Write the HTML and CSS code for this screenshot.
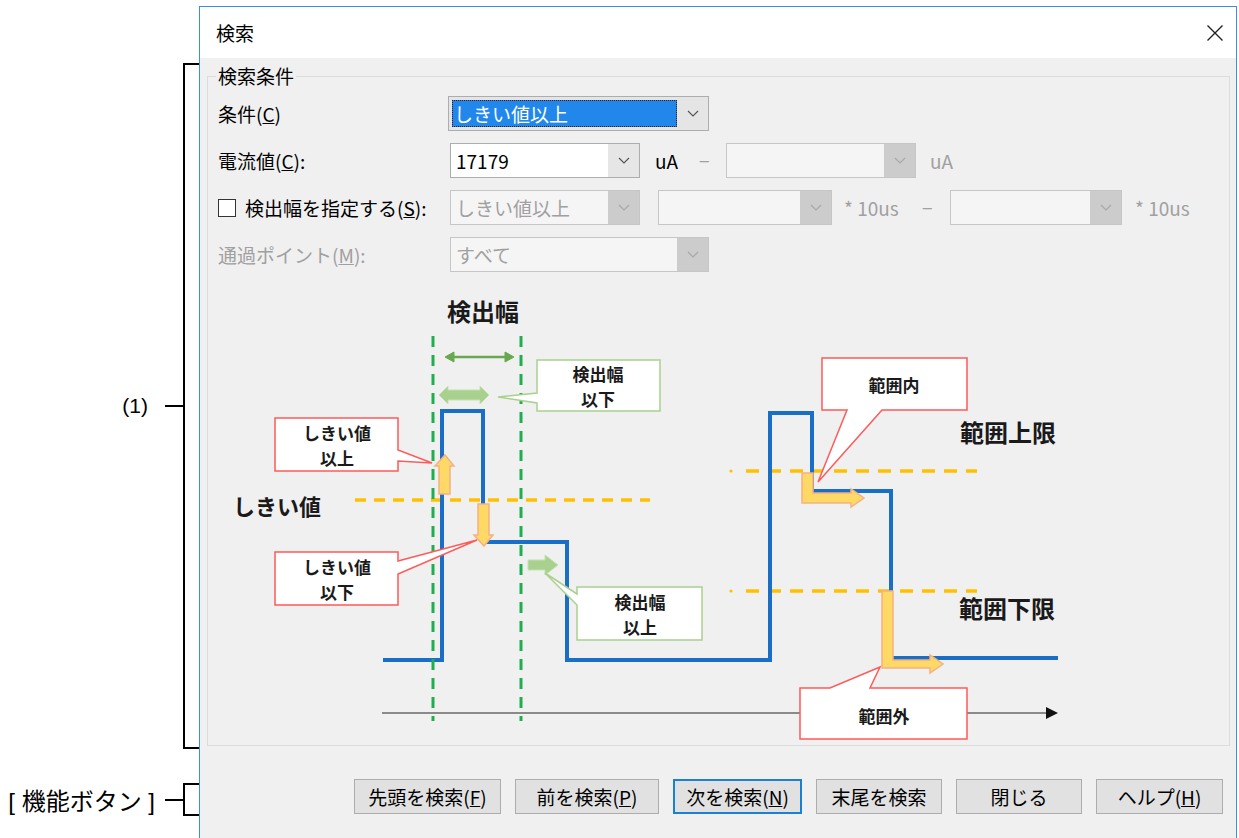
FILE: index.html
```html
<!DOCTYPE html>
<html lang="ja">
<head>
<meta charset="utf-8">
<title>検索</title>
<link rel="stylesheet" href="styles.css">
</head>
<body>
<div class="page">
  <div class="annot">
    <div class="brk brk-main"><span class="brk-label">(1)</span><span class="brk-tick"></span><span class="brk-bar"></span></div>
    <div class="brk brk-btn"><span class="brk-label brk-label-lg">[ 機能ボタン ]</span><span class="brk-tick"></span><span class="brk-bar"></span></div>
  </div>

  <div class="dialog">
    <div class="titlebar">
      <span class="title">検索</span>
      <svg class="close" width="18" height="18" viewBox="0 0 18 18"><path d="M1.5 1.5 L16.5 16.5 M16.5 1.5 L1.5 16.5" stroke="#222" stroke-width="1.4" fill="none"/></svg>
    </div>

    <div class="client">
      <fieldset class="group">
        <legend>検索条件</legend>
        <div class="rows">
          <div class="row">
            <span class="lab">条件(<u>C</u>)</span>
            <div class="combo list w261">
              <span class="txt"><span class="sel">しきい値以上</span></span>
              <span class="drop"><svg width="12" height="7" viewBox="0 0 12 7"><path d="M1 1 L6 6 L11 1" stroke="#555" stroke-width="1.2" fill="none"/></svg></span>
            </div>
          </div>

          <div class="row">
            <span class="lab">電流値(<u>C</u>):</span>
            <div class="combo w190">
              <span class="txt">17179</span>
              <span class="drop"><svg width="12" height="7" viewBox="0 0 12 7"><path d="M1 1 L6 6 L11 1" stroke="#555" stroke-width="1.2" fill="none"/></svg></span>
            </div>
            <span class="cell ua1">uA</span>
            <span class="cell dash1 dis">−</span>
            <div class="combo dis-combo w190">
              <span class="txt"></span>
              <span class="drop"><svg width="12" height="7" viewBox="0 0 12 7"><path d="M1 1 L6 6 L11 1" stroke="#a8a8a8" stroke-width="1.2" fill="none"/></svg></span>
            </div>
            <span class="cell ua2 dis">uA</span>
          </div>

          <div class="row">
            <span class="lab lab-check"><span class="check"></span>検出幅を指定する(<u>S</u>):</span>
            <div class="combo dis-combo w190">
              <span class="txt dis">しきい値以上</span>
              <span class="drop"><svg width="12" height="7" viewBox="0 0 12 7"><path d="M1 1 L6 6 L11 1" stroke="#a8a8a8" stroke-width="1.2" fill="none"/></svg></span>
            </div>
            <div class="combo dis-combo w174 ml18">
              <span class="txt"></span>
              <span class="drop"><svg width="12" height="7" viewBox="0 0 12 7"><path d="M1 1 L6 6 L11 1" stroke="#a8a8a8" stroke-width="1.2" fill="none"/></svg></span>
            </div>
            <span class="cell us1 dis">* 10us</span>
            <span class="cell dash2 dis">−</span>
            <div class="combo dis-combo w172">
              <span class="txt"></span>
              <span class="drop"><svg width="12" height="7" viewBox="0 0 12 7"><path d="M1 1 L6 6 L11 1" stroke="#a8a8a8" stroke-width="1.2" fill="none"/></svg></span>
            </div>
            <span class="cell us2 dis">* 10us</span>
          </div>

          <div class="row">
            <span class="lab dis">通過ポイント(<u>M</u>):</span>
            <div class="combo dis-combo w259">
              <span class="txt dis">すべて</span>
              <span class="drop"><svg width="12" height="7" viewBox="0 0 12 7"><path d="M1 1 L6 6 L11 1" stroke="#a8a8a8" stroke-width="1.2" fill="none"/></svg></span>
            </div>
          </div>
        </div>

        <svg class="diagram" width="1021" height="465" viewBox="208 280 1021 465">
          <line x1="382" y1="713" x2="1048" y2="713" stroke="#8a8a8a" stroke-width="2"/>
          <path d="M1046 707 L1058 713 L1046 719 Z" fill="#111"/>

          <text class="big" x="483" y="310">検出幅</text>
          <text class="big big2" x="277" y="505">しきい値</text>
          <text class="big" x="1008" y="431">範囲上限</text>
          <text class="big" x="1007" y="607">範囲下限</text>

          <line x1="355" y1="500" x2="650" y2="500" stroke="#ffc000" stroke-width="3.5" stroke-dasharray="11 8"/>
          <circle cx="731" cy="471" r="1.6" fill="#ffc000"/>
          <line x1="746" y1="471" x2="977" y2="471" stroke="#ffc000" stroke-width="3.5" stroke-dasharray="13 9"/>
          <circle cx="731" cy="591" r="1.6" fill="#ffc000"/>
          <line x1="746" y1="591" x2="977" y2="591" stroke="#ffc000" stroke-width="3.5" stroke-dasharray="13 9"/>

          <path d="M383 660 H442 V411 H483 V542 H567 V660 H770 V413 H812 V491 H891 V658 H1058" stroke="#1a6ec6" stroke-width="4" fill="none" stroke-linejoin="miter"/>

          <line x1="433" y1="336" x2="433" y2="721" stroke="#1fae4f" stroke-width="3" stroke-dasharray="11 8"/>
          <line x1="521" y1="336" x2="521" y2="721" stroke="#1fae4f" stroke-width="3" stroke-dasharray="11 8"/>

          <line x1="452" y1="357" x2="506" y2="357" stroke="#6aa84f" stroke-width="2.5"/>
          <path d="M445 357 L454 352 L454 362 Z M514 357 L505 352 L505 362 Z" fill="#6aa84f" stroke="#6aa84f" stroke-width="1"/>

          <path d="M439 395 L448 386 L448 390 L480 390 L480 386 L489 395 L480 404 L480 400 L448 400 L448 404 Z" fill="#a9d18e" stroke="#c5e0b4" stroke-width="1"/>

          <path d="M528 560 L545 560 L545 555 L558 565 L545 575 L545 570 L528 570 Z" fill="#a9d18e" stroke="#c5e0b4" stroke-width="1"/>

          <path d="M445 455 L454 466 L450 466 L450 494 L439 494 L439 466 L435 466 Z" fill="#ffd966" stroke="#f4b183" stroke-width="1.5"/>
          <path d="M484 546 L493 535 L489 535 L489 504 L478 504 L478 535 L474 535 Z" fill="#ffd966" stroke="#f4b183" stroke-width="1.5"/>
          <path d="M802 473 L813 473 L813 493 L851 493 L851 489 L864 498 L851 507 L851 503 L802 503 Z" fill="#ffd966" stroke="#f4b183" stroke-width="1.5"/>
          <path d="M882 591 L893 591 L893 660 L930 660 L930 655 L943 664 L930 673 L930 668 L882 668 Z" fill="#ffd966" stroke="#f4b183" stroke-width="1.5"/>

          <path d="M537 360 H660 V411 H537 V403 L498 397 L537 393 Z" fill="#fff" stroke="#a9d18e" stroke-width="1.5"/>
          <text class="co" x="598" y="373">検出幅</text>
          <text class="co" x="598" y="398">以下</text>

          <path d="M577 587 H702 V640 H577 V605 L545 573 L577 594 Z" fill="#fff" stroke="#a9d18e" stroke-width="1.5"/>
          <text class="co" x="640" y="601">検出幅</text>
          <text class="co" x="640" y="626">以上</text>

          <path d="M275 418 H398 V450 L432 463 L398 461 V471 H275 Z" fill="#fff" stroke="#ff5a5a" stroke-width="1.5"/>
          <text class="co" x="337" y="432">しきい値</text>
          <text class="co" x="337" y="457">以上</text>

          <path d="M275 552 H398 V561 L477 540 L398 574 V605 H275 Z" fill="#fff" stroke="#ff5a5a" stroke-width="1.5"/>
          <text class="co" x="337" y="566">しきい値</text>
          <text class="co" x="337" y="591">以下</text>

          <path d="M822 358 H967 V410 H882 L818 482 L847 410 H822 Z" fill="#fff" stroke="#ff5a5a" stroke-width="1.5"/>
          <text class="co" x="894" y="384">範囲内</text>

          <path d="M800 688 H830 L880 667 L870 688 H967 V739 H800 Z" fill="#fff" stroke="#ff5a5a" stroke-width="1.5"/>
          <text class="co" x="884" y="715">範囲外</text>
        </svg>
      </fieldset>

      <div class="buttons">
        <button class="btn b147">先頭を検索(<u>F</u>)</button>
        <button class="btn b144">前を検索(<u>P</u>)</button>
        <button class="btn focus">次を検索(<u>N</u>)</button>
        <button class="btn">末尾を検索</button>
        <button class="btn">閉じる</button>
        <button class="btn b127">ヘルプ(<u>H</u>)</button>
      </div>
    </div>
  </div>
</div>
</body>
</html>
```

FILE: styles.css
```css
* { box-sizing: border-box; }
html, body { margin: 0; height: 100%; overflow: hidden; background: #fff; }
body { font-family: "Noto Sans CJK JP", "Noto Sans", sans-serif; color: #000; }

.page { display: flex; align-items: flex-start; }

.annot {
  width: 199px; flex: none;
  padding-top: 63px;
  display: flex; flex-direction: column;
  font-family: "Liberation Sans", "Noto Sans CJK JP", sans-serif;
}
.brk { display: flex; align-items: center; }
.brk-main { height: 686px; }
.brk-btn { height: 33px; margin-top: 34px; }
.brk-label { flex: 1; text-align: right; padding-right: 17px; font-size: 21px; white-space: nowrap; }
.brk-label-lg { font-size: 24px; padding-right: 10px; }
.brk-tick { width: 18px; height: 2px; background: #000; flex: none; }
.brk-bar { align-self: stretch; width: 16px; flex: none; border: 2px solid #000; border-right: 0; }

.dialog {
  width: 1038px; height: 832px; flex: none;
  margin-top: 6px;
  border: 1px solid #3d8fdb; border-bottom: 0;
  display: flex; flex-direction: column;
  background: #f0f0f0;
}
.titlebar {
  height: 51px; flex: none; background: #fff;
  display: flex; align-items: center; justify-content: space-between;
  padding: 0 12px 0 16px;
}
.title { font-size: 19px; }
.client { flex: 1; display: flex; flex-direction: column; }

.group {
  margin: 8px 6px 0 7px;
  border: 1px solid #dcdcdc;
  padding: 10px 0 0 0;
  min-width: 0;
}
.group legend { margin-left: 8px; padding: 0 2px; font-size: 19px; line-height: 20px; }

.rows { padding-left: 10px; display: flex; flex-direction: column; gap: 12px; }
.row { display: flex; align-items: center; height: 35px; font-size: 19px; }
.lab { width: 232px; flex: none; white-space: nowrap; }
.lab-check { display: flex; align-items: center; }
.check { width: 18px; height: 18px; border: 1px solid #333; background: #fff; margin-right: 9px; flex: none; }
.dis { color: #a0a0a0; }

.combo { display: flex; height: 35px; border: 1px solid #adadad; background: #fff; flex: none; }
.combo .txt { flex: 1; display: flex; align-items: center; padding-left: 5px; white-space: nowrap; }
.combo .drop { width: 31px; display: flex; align-items: center; justify-content: center; background: #e6e6e6; }
.combo.list { background: #e5e5e5; padding: 3px 0 3px 3px; }
.combo.list .txt { padding: 0; }
.combo.list .drop { background: transparent; }
.sel {
  flex: 1; align-self: stretch;
  display: flex; align-items: center;
  background: #2287ea; color: #fff;
  padding-left: 2px;
  outline: 1px dotted #222; outline-offset: -1px;
}
.dis-combo { border-color: #c6c6c6; background: #f5f5f5; }
.dis-combo .drop { background: #cccccc; }

.w261 { width: 261px; margin-left: -2px; }
.w190 { width: 190px; }
.w174 { width: 174px; }
.w172 { width: 172px; }
.w259 { width: 259px; }
.ml18 { margin-left: 18px; }

.cell { flex: none; white-space: nowrap; }
.ua1 { margin-left: 15px; width: 44px; }
.dash1 { width: 27px; }
.ua2 { margin-left: 14px; }
.us1 { margin-left: 12px; width: 78px; }
.dash2 { width: 28px; }
.us2 { margin-left: 13px; }

.diagram { display: block; margin-top: 8px; }
.diagram text { font-family: "Noto Sans CJK JP", sans-serif; font-weight: 700; text-anchor: middle; dominant-baseline: central; fill: #1a1a1a; }
.diagram .big { font-size: 24px; }
.diagram .big2 { font-size: 22px; }
.diagram .co { font-size: 17px; }

.buttons {
  display: flex; justify-content: flex-end; gap: 14px;
  padding: 33px 13px 0 0;
}
.btn {
  width: 126px; height: 35px;
  font-family: "Noto Sans CJK JP", sans-serif; font-size: 19px;
  background: #e1e1e1; border: 1px solid #adadad; color: #000;
  padding: 0; white-space: nowrap;
}
.btn.b147 { width: 147px; }
.btn.b144 { width: 144px; }
.btn.b127 { width: 127px; }
.btn.focus { border: 2px solid #1a7fd6; width: 129px; }
```
